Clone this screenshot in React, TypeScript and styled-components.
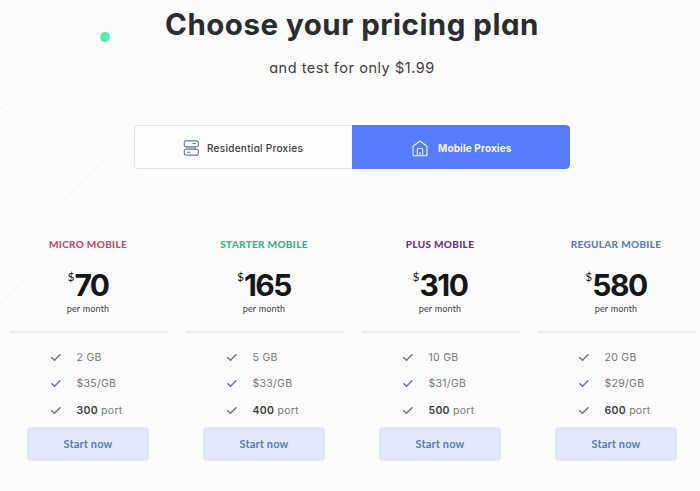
import React from 'react';
import styled, { createGlobalStyle } from 'styled-components';

const GlobalStyle = createGlobalStyle`
  * { box-sizing: border-box; }
  body {
    margin: 0;
    background: #fcfcfc;
    color: #2b2c30;
    font-family: Inter, 'Liberation Sans', sans-serif;
    font-feature-settings: 'cv11';
    overflow: hidden;
  }
`;

const Page = styled.main`
  position: relative;
  width: 704px;
  height: 491px;
  display: flex;
  flex-direction: column;
  align-items: flex-start;
`;

const Backdrop = styled.svg`
  position: absolute;
  left: 0;
  top: 80px;
  z-index: -1;
`;

const Dot = styled.span`
  position: absolute;
  left: 100px;
  top: 32px;
  width: 10px;
  height: 10px;
  border-radius: 50%;
  background: #4fedb0;
`;

const Header = styled.header`
  width: 704px;
  height: 125px;
  text-align: center;
`;

const Title = styled.h1`
  margin: 4px 0 0;
  font-size: 29.5px;
  line-height: 40px;
  font-weight: 700;
  letter-spacing: 0.5px;
`;

const Subtitle = styled.p`
  margin: 13px 0 0;
  font-size: 14.5px;
  line-height: 22px;
  letter-spacing: 0.53px;
  color: #3f4044;
`;

const Tabs = styled.div`
  display: grid;
  grid-template-columns: 218px 218px;
  width: 436px;
  height: 44px;
  margin-left: 134px;
  border-radius: 4px;
  overflow: hidden;
`;

const Tab = styled.button<{ $active?: boolean }>`
  display: flex;
  align-items: center;
  padding: 2px 0 0 ${p => (p.$active ? 60 : 48)}px;
  gap: ${p => (p.$active ? 10 : 7)}px;
  border: ${p => (p.$active ? '0' : '1px solid #e4e5e9')};
  border-right: 0;
  border-radius: ${p => (p.$active ? '0 4px 4px 0' : '4px 0 0 4px')};
  background: ${p => (p.$active ? '#557cfc' : '#fdfdfd')};
  color: ${p => (p.$active ? '#f5f8ff' : '#3a3b3f')};
  font: ${p => (p.$active ? 700 : 500)} 10px Inter, sans-serif;
  font-feature-settings: 'cv11';
  letter-spacing: ${p => (p.$active ? 0.12 : 0.28)}px;
  white-space: nowrap;
`;

const Plans = styled.section`
  display: grid;
  grid-template-columns: repeat(4, 176px);
  margin-top: 66px;
`;

const Plan = styled.article`
  display: flex;
  flex-direction: column;
  align-items: center;
`;

const PlanName = styled.h2<{ $color: string }>`
  margin: 2px 0 0;
  font: 900 10px/14px Lato, sans-serif;
  letter-spacing: 0.32px;
  color: ${p => p.$color};
`;

const Price = styled.div`
  display: flex;
  align-items: flex-start;
  height: 38px;
  margin-top: 15px;
  font-size: 30px;
  line-height: 38px;
  font-weight: 700;
  letter-spacing: -1.5px;
  color: #151618;
`;

const Currency = styled.sup`
  margin-top: 1px;
  font: 400 12px/20px Lato, sans-serif;
  letter-spacing: 0;
`;

const Period = styled.div`
  margin-top: -1px;
  font: 400 9px/12px Lato, sans-serif;
  letter-spacing: 0.2px;
  color: #404144;
`;

const Rule = styled.hr`
  width: 157px;
  height: 2px;
  margin: 16px 0 0;
  border: 0;
  background: #efeff1;
`;

const Features = styled.ul`
  list-style: none;
  width: 75px;
  margin: 11px 0 0;
  padding: 0;
`;

const Feature = styled.li`
  display: flex;
  align-items: center;
  gap: 16px;
  height: 26.5px;
  font-size: 10.5px;
  letter-spacing: 0.28px;
  color: #77787c;
  white-space: nowrap;
  b { font-weight: 600; color: #3f4043; }
`;

const Start = styled.button`
  width: 122px;
  height: 34px;
  margin-top: 3.5px;
  padding: 0 0 2px;
  border: 0;
  border-radius: 4px;
  background: #e2e8fb;
  color: #5b7cb0;
  font: 700 11px Lato, sans-serif;
  letter-spacing: 0.17px;
`;

const ServerIcon = () => (
  <svg width="17" height="16" viewBox="0 0 17 16" fill="none" stroke="#6478ad" strokeWidth="1.1" strokeLinecap="round">
    <rect x="1.3" y="0.9" width="14" height="5.8" rx="1.4" />
    <rect x="1.3" y="9.3" width="14" height="5.8" rx="1.4" />
    <path d="M9.8 3.5h2.6M4.2 12.2h2.6M3.8 6.8v.7q0 .5.5.5h8q.5 0 .5.5v.6" />
  </svg>
);

const HomeIcon = () => (
  <svg width="16" height="17" viewBox="0 0 16 17" fill="none" stroke="#e4edff" strokeWidth="1.15" strokeLinejoin="round">
    <path d="M1 6.2 8 1l7 5.2v8a1.5 1.5 0 0 1-1.5 1.5h-11A1.5 1.5 0 0 1 1 14.2z" />
    <path d="M5.3 15.5V9.2q0-.7.7-.7h4q.7 0 .7.7v6.3M8 15.5V12" />
  </svg>
);

const CheckIcon = () => (
  <svg width="10" height="9" viewBox="0 0 10 9" fill="none" stroke="#6477a5" strokeWidth="1.5" strokeLinecap="round" strokeLinejoin="round">
    <path d="m.8 4.7 2.7 2.5L9 1.8" />
  </svg>
);

const plans = [
  { name: 'MICRO MOBILE', color: '#b9506f', price: 70, data: '2 GB', rate: '$35/GB', ports: 300 },
  { name: 'STARTER MOBILE', color: '#43af8b', price: 165, data: '5 GB', rate: '$33/GB', ports: 400 },
  { name: 'PLUS MOBILE', color: '#683571', price: 310, data: '10 GB', rate: '$31/GB', ports: 500 },
  { name: 'REGULAR MOBILE', color: '#5e7cb4', price: 580, data: '20 GB', rate: '$29/GB', ports: 600 },
];

export default function App() {
  return (
    <Page>
      <GlobalStyle />
      <Backdrop width="120" height="240" fill="none" stroke="#f5f5f6">
        <path d="M0 29 42 0M0 108 72 38M58 126 104 80M0 178 38 142M0 224 24 200" />
      </Backdrop>
      <Dot />
      <Header>
        <Title>Choose your pricing plan</Title>
        <Subtitle>and test for only $1.99</Subtitle>
      </Header>
      <Tabs>
        <Tab><ServerIcon />Residential Proxies</Tab>
        <Tab $active><HomeIcon />Mobile Proxies</Tab>
      </Tabs>
      <Plans>
        {plans.map(plan => (
          <Plan key={plan.name}>
            <PlanName $color={plan.color}>{plan.name}</PlanName>
            <Price><Currency>$</Currency>{plan.price}</Price>
            <Period>per month</Period>
            <Rule />
            <Features>
              <Feature><CheckIcon /><span>{plan.data}</span></Feature>
              <Feature><CheckIcon /><span>{plan.rate}</span></Feature>
              <Feature><CheckIcon /><span><b>{plan.ports}</b> port</span></Feature>
            </Features>
            <Start>Start now</Start>
          </Plan>
        ))}
      </Plans>
    </Page>
  );
}
